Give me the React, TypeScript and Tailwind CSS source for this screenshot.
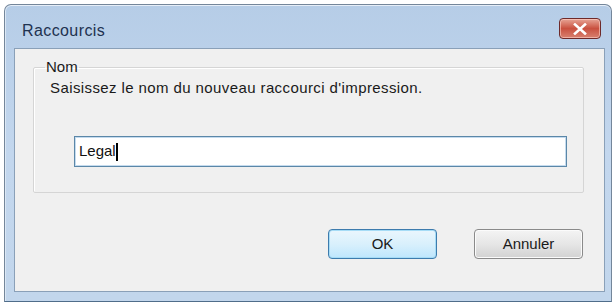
import React from "react";

const font = { fontFamily: '"Liberation Sans", Arial, sans-serif' };

function CloseButton() {
  return (
    <div className="w-[42px] h-[21px] rounded-[4px] border border-[#6e2a2a] bg-gradient-to-b from-[#e6a496] via-[#c9503f] to-[#d8806f] shadow-[inset_0_0_0_1px_rgba(255,210,200,0.6)] flex items-center justify-center">
      <svg width="14" height="12" viewBox="0 0 14 12">
        <path d="M2 1.5 L12 10.5 M12 1.5 L2 10.5" stroke="#ffffff" strokeWidth="2.6" strokeLinecap="square" />
      </svg>
    </div>
  );
}

function DialogButton({ label, focused }: { label: string; focused?: boolean }) {
  return (
    <button
      type="button"
      className={
        focused
          ? "w-[109px] h-[30px] rounded-[4px] border border-[#3d7bad] bg-gradient-to-b from-[#eaf6fd] via-[#d9f0fc] to-[#bee6fd] shadow-[inset_0_0_0_1px_#a6dcf6] text-[15px] text-[#1a1a1a]"
          : "w-[109px] h-[30px] rounded-[4px] border border-[#8a8a8a] bg-gradient-to-b from-[#f4f4f4] via-[#e6e6e6] to-[#d2d2d2] shadow-[inset_0_0_0_1px_#fbfbfb] text-[15px] text-[#1a1a1a]"
      }
    >
      {label}
    </button>
  );
}

export default function App() {
  return (
    <div className="w-[615px] h-[303px] bg-white pt-[4px] pl-[4px] overflow-hidden" style={font}>
      <div className="w-[608px] h-[298px] rounded-t-[7px] border border-[#74869a] border-b-[#4f6d8a] bg-gradient-to-b from-[#b6cde7] via-[#c3d7ee] to-[#c2d6ec] shadow-[inset_0_1px_0_#e6eef8,inset_1px_0_0_#dce8f5] flex flex-col">
        {/* Title bar */}
        <div className="h-[43px] flex items-start justify-between pl-[17px] pr-[10px]">
          <span className="mt-[14px] text-[16px] tracking-[0.4px] text-[#1e3250]">Raccourcis</span>
          <div className="mt-[13px]">
            <CloseButton />
          </div>
        </div>

        {/* Client area */}
        <div className="flex-1 ml-[9px] mr-[6px] mb-[9px] border border-[#8aa0b8] bg-[#f0f0f0] flex flex-col">
          <fieldset className="ml-[18px] mr-[25px] mt-[9px] h-[135px] border border-[#d5d5d5] rounded-[2px] shadow-[inset_1px_1px_0_#ffffff] px-[16px]">
            <legend className="ml-[-5px] px-[1px] text-[15px] text-[#1a1a1a] leading-[18px]">Nom</legend>
            <p className="mt-[3px] text-[15px] tracking-[0.4px] text-[#1a1a1a] leading-[18px]">
              Saisissez le nom du nouveau raccourci d'impression.
            </p>
            <div className="mt-[39px] ml-[24px] w-[493px] h-[31px] border border-[#5b87a8] bg-white shadow-[inset_0_0_0_1px_#c5dbee] flex items-center px-[4px]">
              <span className="text-[15px] text-[#111]">Legal</span>
              <span className="w-[2px] h-[18px] bg-black" />
            </div>
          </fieldset>
          <div className="mt-[36px] flex justify-end gap-[37px] pr-[21px]">
            <DialogButton label="OK" focused />
            <DialogButton label="Annuler" />
          </div>
        </div>
      </div>
    </div>
  );
}
